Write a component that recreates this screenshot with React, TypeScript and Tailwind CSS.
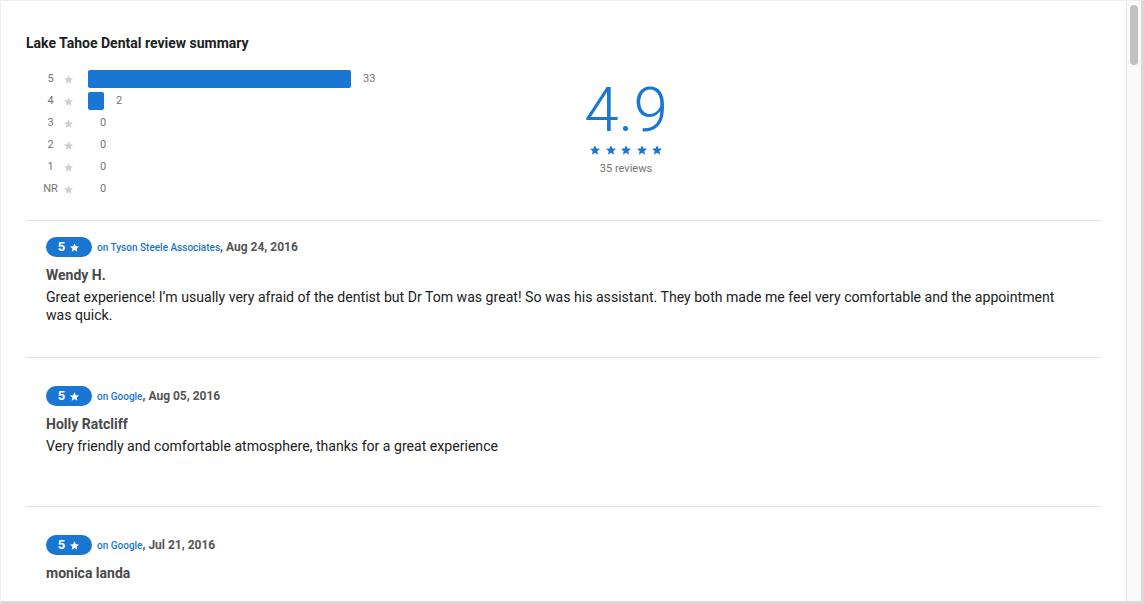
import React from 'react';

const BLUE = '#1976d2';

type Row = { label: string; count: number };

const rows: Row[] = [
  { label: '5', count: 33 },
  { label: '4', count: 2 },
  { label: '3', count: 0 },
  { label: '2', count: 0 },
  { label: '1', count: 0 },
  { label: 'NR', count: 0 },
];

const reviews = [
  {
    source: 'Tyson Steele Associates',
    date: 'Aug 24, 2016',
    name: 'Wendy H.',
    text: 'Great experience! I’m usually very afraid of the dentist but Dr Tom was great! So was his assistant. They both made me feel very comfortable and the appointment was quick.',
    first: true,
  },
  {
    source: 'Google',
    date: 'Aug 05, 2016',
    name: 'Holly Ratcliff',
    text: 'Very friendly and comfortable atmosphere, thanks for a great experience',
  },
  {
    source: 'Google',
    date: 'Jul 21, 2016',
    name: 'monica landa',
    text: '',
  },
];

const Star: React.FC<{ className?: string; color: string }> = ({ className, color }) => (
  <svg viewBox="0 0 24 24" className={className} fill={color}>
    <path d="M12 2.5l2.9 6.6 7.1.6-5.4 4.7 1.6 7-6.2-3.7-6.2 3.7 1.6-7L2 9.7l7.1-.6z" />
  </svg>
);

const maxCount = 33;
const maxWidth = 263;

function Histogram() {
  return (
    <div className="w-[400px] flex flex-col">
      {rows.map(r => (
        <div key={r.label} className="flex items-center h-[22px] text-[11px] text-[#757575]">
          <span className="w-[25px] ml-[12px] text-center">{r.label}</span>
          <Star className="w-[11px] h-[11px]" color="#cfcfcf" />
          <div className="ml-[14px] flex items-center">
            {r.count > 0 && (
              <div className="h-[18px] rounded-[2px] bg-[#1976d2]" style={{ width: Math.max(16, (r.count / maxCount) * maxWidth) }} />
            )}
            <span className="ml-[12px]">{r.count}</span>
          </div>
        </div>
      ))}
    </div>
  );
}

function Rating() {
  return (
    <div className="w-[400px] flex flex-col items-center pt-[11px]">
      <div className="text-[62px] leading-[62px] font-light text-[#1976d2]">4.9</div>
      <div className="flex gap-[3.5px] mt-[2px] h-[14px] items-center">
        {[0, 1, 2, 3, 4].map(i => (
          <Star key={i} className="w-[12px] h-[12px]" color={BLUE} />
        ))}
      </div>
      <div className="mt-[5px] text-[11px] leading-[14px] text-[#757575]">35 reviews</div>
    </div>
  );
}

function Review({ r }: { r: (typeof reviews)[number] }) {
  return (
    <div className={`${r.first ? 'pt-[16px] h-[136px]' : 'pt-[28px] h-[148px]'} pl-[20px] pr-[30px]`}>
      <div className="flex items-center h-[20px]">
        <div className="w-[46px] h-[20px] rounded-full bg-[#1976d2] flex items-center justify-center gap-[4px] text-white text-[13px] font-bold">
          <span>5</span>
          <Star className="w-[11px] h-[11px]" color="#ffffff" />
        </div>
        <span className="ml-[5px] text-[10px] font-medium text-[#1976d2]">on {r.source}</span>
        <span className="text-[12px] font-bold text-[#555555]">, {r.date}</span>
      </div>
      <div className="mt-[9px] text-[14px] leading-[18px] font-bold text-[#4a4a4a]">{r.name}</div>
      {r.text && <p className="mt-[4px] text-[14.1px] leading-[18px] text-[#212121]">{r.text}</p>}
    </div>
  );
}

export default function App() {
  return (
    <div className="w-[1144px] h-[604px] flex bg-white font-['Roboto',sans-serif] border-t border-l border-t-[#eeeeee] border-l-[#eeeeee] border-r-[3px] border-b-[3px] border-r-[#d9d9d9] border-b-[#d9d9d9] overflow-hidden">
      <div className="flex-1 overflow-hidden pl-[25px] pr-[25px] pt-[32px]">
        <h1 className="text-[14px] leading-[20px] font-bold text-[#212121]">Lake Tahoe Dental review summary</h1>
        <div className="flex mt-[15px] pb-[20px] border-b border-[#e0e0e0]">
          <Histogram />
          <Rating />
        </div>
        {reviews.map((r, i) => (
          <div key={i} className={i < reviews.length - 1 ? 'border-b border-[#e0e0e0]' : ''}>
            <Review r={r} />
          </div>
        ))}
      </div>
      <div className="w-[15px] shrink-0 bg-[#fafafa] border-l border-[#e6e6e6] pt-[4px] pl-[3px]">
        <div className="w-[8px] h-[60px] rounded-full bg-[#c1c1c1]" />
      </div>
    </div>
  );
}
